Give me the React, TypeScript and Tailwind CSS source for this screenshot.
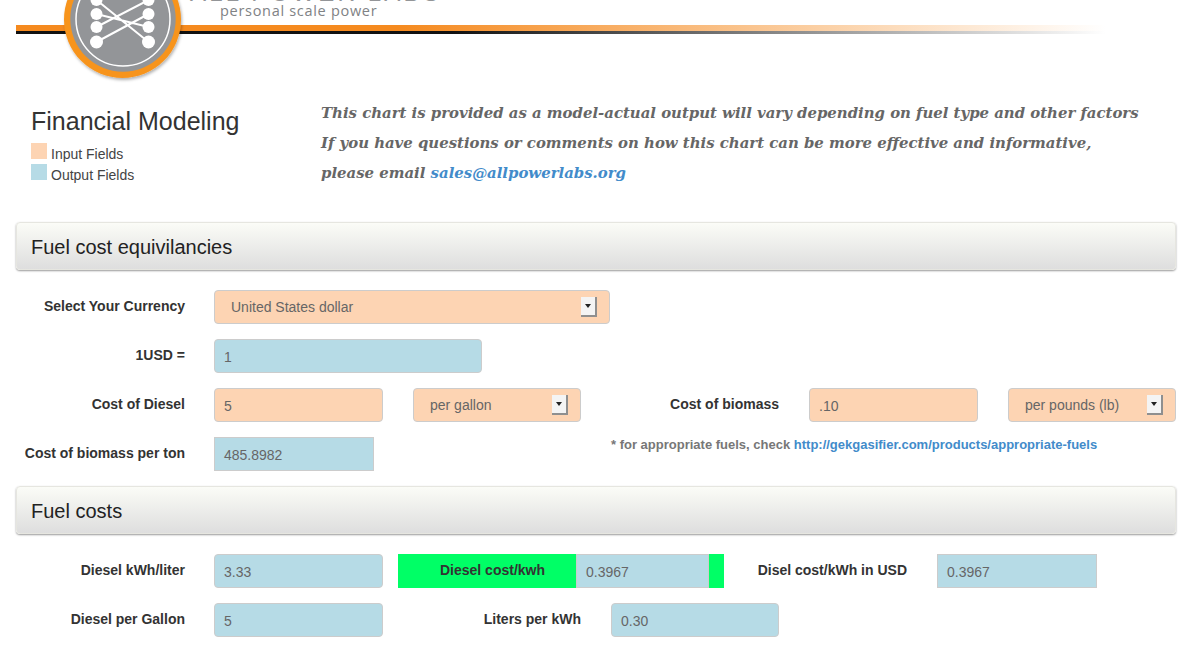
const inputCls = "h-[34px] border border-[#cccccc] rounded-[4px] flex items-center text-[14px] text-[#666666] shrink-0";
const orange = "bg-[#fdd4b3]";
const blue = "bg-[#b6dbe6]";

const Label = ({ w = "w-[169px]", children }: { w?: string; children: React.ReactNode }) => (
  <div className={`${w} shrink-0 text-right text-[14px] font-bold text-[#333333] -mt-[1px]`}>{children}</div>
);

const Field = ({ w, color, square, children }: { w: string; color: string; square?: boolean; children: React.ReactNode }) => (
  <div className={`${inputCls} ${w} ${color} pl-[9px] pt-[2px] ${square ? "rounded-none" : ""}`}>{children}</div>
);

const Select = ({ w, children }: { w: string; children: React.ReactNode }) => (
  <div className={`${inputCls} ${w} ${orange} pl-[16px] pr-[12px] justify-between`}>
    <span>{children}</span>
    <span className="w-[16px] h-[20px] bg-[#f4f4f4] border-r-2 border-b-2 border-[#8f8f8f] flex items-center justify-center">
      <svg width="6" height="4" viewBox="0 0 6 4"><path d="M0 0h6L3 4z" fill="#222" /></svg>
    </span>
  </div>
);

const Panel = ({ children }: { children: React.ReactNode }) => (
  <div className="ml-[16px] w-[1160px] h-[48px] flex items-center pl-[14px] pt-[1px] text-[20px] text-[#222222] rounded-[4px] border border-[#e6e6e0] bg-gradient-to-b from-[#fbfcf7] to-[#dedede] shadow-[0_1px_2px_rgba(0,0,0,0.4)]">
    {children}
  </div>
);

const Logo = () => (
  <svg className="absolute left-[62px] top-[-40px]" width="124" height="126" viewBox="0 0 124 126">
    <defs>
      <filter id="soft" x="-10%" y="-10%" width="120%" height="125%">
        <feDropShadow dx="1" dy="2" stdDeviation="1.5" floodColor="#000" floodOpacity="0.3" />
      </filter>
    </defs>
    <circle cx="60.5" cy="59.5" r="58.5" fill="#f7941e" filter="url(#soft)" />
    <circle cx="61" cy="59" r="52.7" fill="#939598" />
    <circle cx="61" cy="59" r="47" fill="none" stroke="#fff" strokeWidth="1.5" />
    <g stroke="#fff" strokeWidth="2" fill="none">
      <path d="M34.5 82L86.5 54M34.5 40L86.5 82M34.5 67L86.5 40M34.5 54L86.5 67" />
    </g>
    <g fill="#fff">
      <circle cx="34.5" cy="40" r="6" />
      <circle cx="34.5" cy="54" r="6" />
      <circle cx="34.5" cy="67" r="6" />
      <circle cx="34.5" cy="82" r="6.5" />
      <circle cx="86.5" cy="40" r="6" />
      <circle cx="86.5" cy="54" r="6" />
      <circle cx="86.5" cy="67" r="6" />
      <circle cx="86.5" cy="82" r="6.5" />
    </g>
  </svg>
);

export default function App() {
  return (
    <div className="w-[1194px] h-[650px] overflow-hidden bg-white font-['Liberation_Sans',sans-serif] text-[#333333]">
      {/* header */}
      <div className="relative h-[36px] pt-[25px]">
        <div className="absolute left-[190px] top-[-16px] text-[24px] tracking-[3.2px] leading-[18px] text-[#939598] whitespace-nowrap">ALL POWER LABS</div>
        <div className="absolute left-[220px] top-[3px] text-[14.5px] tracking-[0.7px] leading-[16px] text-[#808285] font-['Open_Sans',sans-serif] whitespace-nowrap">personal scale power</div>
        <div className="ml-[16px] w-[1090px] h-[6px] bg-gradient-to-r from-[#f58a1f] from-[35%] to-transparent" />
        <div className="ml-[16px] w-[1090px] h-[3px] bg-gradient-to-r from-[#111111] from-[40%] to-transparent" />
        <Logo />
      </div>

      {/* intro */}
      <div className="flex h-[186px]">
        <div className="w-[321px] shrink-0 pl-[31px] pt-[70px]">
          <h1 className="text-[25px] leading-[30px] text-[#333333]">Financial Modeling</h1>
          <div className="mt-[7px] flex flex-col gap-[5px] text-[14px] text-[#444444]">
            <div className="flex h-[16px] items-center gap-[4px]">
              <span className={`w-[16px] h-[16px] ${orange}`} />
              <span className="pt-[6px]">Input Fields</span>
            </div>
            <div className="flex h-[16px] items-center gap-[4px]">
              <span className={`w-[16px] h-[16px] ${blue}`} />
              <span className="pt-[6px]">Output Fields</span>
            </div>
          </div>
        </div>
        <div className="pt-[62px] font-['DejaVu_Serif',serif] italic font-bold text-[14.9px] leading-[30px] text-[#666666] whitespace-nowrap">
          <p>This chart is provided as a model-actual output will vary depending on fuel type and other factors</p>
          <p>If you have questions or comments on how this chart can be more effective and informative,</p>
          <p>please email <a className="text-[#428bca]">sales@allpowerlabs.org</a></p>
        </div>
      </div>

      <Panel>Fuel cost equivilancies</Panel>

      <div className="mt-[20px] ml-[16px] flex flex-col gap-[15px]">
        <div className="flex items-center">
          <Label>Select Your Currency</Label>
          <div className="w-[29px] shrink-0" />
          <Select w="w-[396px]">United States dollar</Select>
        </div>
        <div className="flex items-center">
          <Label>1USD =</Label>
          <div className="w-[29px] shrink-0" />
          <Field w="w-[268px]" color={blue}>1</Field>
        </div>
        <div className="flex items-center">
          <Label>Cost of Diesel</Label>
          <div className="w-[29px] shrink-0" />
          <Field w="w-[169px]" color={orange}>5</Field>
          <div className="w-[30px] shrink-0" />
          <Select w="w-[168px]">per gallon</Select>
          <Label w="w-[198px]">Cost of biomass</Label>
          <div className="w-[30px] shrink-0" />
          <Field w="w-[169px]" color={orange}>.10</Field>
          <div className="w-[30px] shrink-0" />
          <Select w="w-[168px]">per pounds (lb)</Select>
        </div>
        <div className="flex items-center">
          <Label>Cost of biomass per ton</Label>
          <div className="w-[29px] shrink-0" />
          <Field w="w-[160px]" color={blue} square>485.8982</Field>
          <div className="ml-[237px] -mt-[19px] text-[13px] font-bold text-[#777777] whitespace-nowrap">
            * for appropriate fuels, check <a className="text-[#428bca]">http://gekgasifier.com/products/appropriate-fuels</a>
          </div>
        </div>
      </div>

      <div className="mt-[15px]">
        <Panel>Fuel costs</Panel>
      </div>

      <div className="mt-[20px] ml-[16px] flex flex-col gap-[15px]">
        <div className="flex items-center">
          <Label>Diesel kWh/liter</Label>
          <div className="w-[29px] shrink-0" />
          <Field w="w-[169px]" color={blue}>3.33</Field>
          <div className="w-[15px] shrink-0" />
          <div className="flex h-[34px] w-[326px] shrink-0 bg-[#00ff66]">
            <div className="w-[178px] flex items-center justify-center pl-[11px] pb-[2px] text-[14px] font-bold text-[#333333]">Diesel cost/kwh</div>
            <Field w="w-[133px]" color={blue} square>0.3967</Field>
          </div>
          <Label w="w-[183px]">Disel cost/kWh in USD</Label>
          <div className="w-[30px] shrink-0" />
          <Field w="w-[160px]" color={blue} square>0.3967</Field>
        </div>
        <div className="flex items-center">
          <Label>Diesel per Gallon</Label>
          <div className="w-[29px] shrink-0" />
          <Field w="w-[169px]" color={blue}>5</Field>
          <Label w="w-[198px]">Liters per kWh</Label>
          <div className="w-[30px] shrink-0" />
          <Field w="w-[168px]" color={blue}>0.30</Field>
        </div>
      </div>
    </div>
  );
}
